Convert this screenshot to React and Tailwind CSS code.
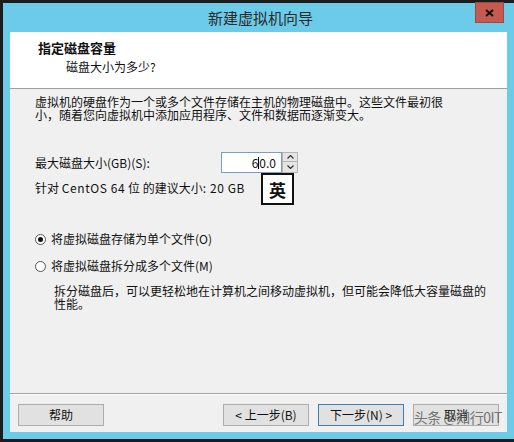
import React from "react";

const F = { fontFamily: '"Noto Sans CJK SC", "Noto Sans", sans-serif' };

function Btn({ children, primary }) {
  return (
    <div
      className={
        "w-[86px] h-[22px] flex items-center justify-center text-[12px] text-[#111] bg-[#e1e1e1] border " +
        (primary ? "border-[#3c7fb1]" : "border-[#adadad]")
      }
    >
      {children}
    </div>
  );
}

function Radio({ checked }) {
  return (
    <div className="w-[11px] h-[11px] rounded-full border border-[#555] bg-white flex items-center justify-center">
      {checked && <div className="w-[5px] h-[5px] rounded-full bg-[#111]" />}
    </div>
  );
}

export default function App() {
  return (
    <div
      className="w-[514px] h-[442px] bg-[#1c1c1c] pt-[3px] pl-[3px] pb-[3px] flex overflow-hidden"
      style={F}
    >
      <div className="flex-1 bg-[#6bcbe9] flex flex-col">
        {/* title bar */}
        <div className="h-[29px] relative flex items-center justify-center">
          <span className="text-[15px] text-[#2a2a2a] leading-none pl-[4px]">新建虚拟机向导</span>
          <div className="absolute right-[10px] top-[-1px] w-[29px] h-[21px] bg-[#c75a50] border border-[#9a4a44] flex items-center justify-center">
            <svg width="9" height="8" viewBox="0 0 9 8">
              <path d="M1 1 L8 7 M8 1 L1 7" stroke="#111" strokeWidth="2" />
            </svg>
          </div>
        </div>

        {/* content */}
        <div className="mx-[7px] mb-[7px] flex-1 flex flex-col bg-[#f0f0f0] text-[12px] text-[#111]">
          {/* header */}
          <div className="h-[57px] bg-white border-b border-[#a0a0a0] flex flex-col">
            <div className="pt-[8px] pl-[28px] leading-[16px] font-bold text-[13px]">指定磁盘容量</div>
            <div className="mt-[3px] pl-[56px] leading-[16px]">磁盘大小为多少?</div>
          </div>

          {/* body */}
          <div className="h-[304px] flex flex-col pl-[25px] pt-[6px] relative">
            <div className="leading-[13px]">
              虚拟机的硬盘作为一个或多个文件存储在主机的物理磁盘中。这些文件最初很
              <br />
              小，随着您向虚拟机中添加应用程序、文件和数据而逐渐变大。
            </div>

            <div className="mt-[31px] flex items-center relative">
              <div className="w-[186px] leading-[13px]">最大磁盘大小(GB)(S):</div>
              <div className="w-[61px] h-[21px] bg-white border border-[#7a9cc8] flex items-center justify-end pr-[5px] leading-none text-[12px]">
                6<span className="inline-block w-px h-[12px] bg-black" />0.0
              </div>
              <div className="w-[16px] h-[21px] flex flex-col">
                <div className="h-[10px] bg-[#e5e5e5] border border-[#b5b5b5] flex items-center justify-center">
                  <svg width="7" height="4" viewBox="0 0 7 4">
                    <path d="M0.5 3.5 L3.5 0.5 L6.5 3.5" stroke="#333" fill="none" strokeWidth="1.2" />
                  </svg>
                </div>
                <div className="h-[11px] bg-[#e5e5e5] border border-[#b5b5b5] border-t-0 flex items-center justify-center">
                  <svg width="7" height="4" viewBox="0 0 7 4">
                    <path d="M0.5 0.5 L3.5 3.5 L6.5 0.5" stroke="#333" fill="none" strokeWidth="1.2" />
                  </svg>
                </div>
              </div>
              <div className="absolute left-[226px] top-[21px] w-[33px] h-[32px] bg-white border-2 border-[#111] flex items-center justify-center text-[17px] font-bold leading-none z-10">
                英
              </div>
            </div>

            <div className="mt-[8px] leading-[13px]">
              针对 <span className="tracking-[0.6px]">CentOS 64</span> 位 的建议大小<span className="tracking-[0.6px]">: 20 GB</span>
            </div>

            <div className="mt-[37px] flex items-center h-[16px]">
              <Radio checked />
              <span className="ml-[5px] leading-[16px]">将虚拟磁盘存储为单个文件(O)</span>
            </div>
            <div className="mt-[11px] flex items-center h-[16px]">
              <Radio />
              <span className="ml-[5px] leading-[16px]">将虚拟磁盘拆分成多个文件(M)</span>
            </div>
            <div className="mt-[10px] pl-[19px] leading-[13px]">
              拆分磁盘后，可以更轻松地在计算机之间移动虚拟机，但可能会降低大容量磁盘的
              <br />
              性能。
            </div>
          </div>

          {/* footer */}
          <div className="border-t border-[#a0a0a0]">
            <div className="border-t border-white flex-1 pt-[9px] pl-[8px] pr-[8px] flex justify-between relative h-[38px]">
              <Btn>帮助</Btn>
              <div className="flex gap-[9px]">
                <Btn>&lt; 上一步(B)</Btn>
                <Btn primary>下一步(N) &gt;</Btn>
                <Btn>取消</Btn>
              </div>
              <div className="absolute right-[5px] top-[13px] text-[14px] leading-[18px] text-[#5a5a5a] opacity-80 tracking-[-0.5px]">
                头条 @知行0IT
              </div>
            </div>
          </div>
        </div>
      </div>
    </div>
  );
}
